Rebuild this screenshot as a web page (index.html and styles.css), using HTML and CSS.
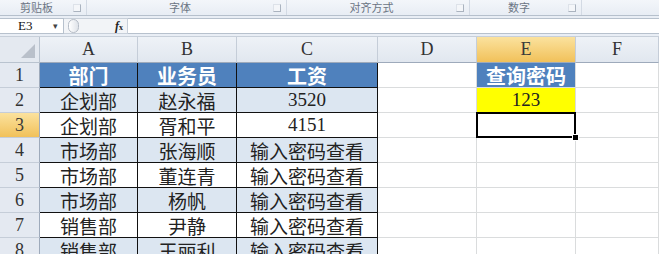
FILE: index.html
```html
<!DOCTYPE html>
<html lang="zh-CN">
<head>
    <meta charset="UTF-8">
    <title>工资查询</title>
    <link rel="stylesheet" href="styles.css">
</head>
<body>

    <div class="ribbon">
        <div class="group g-clip"><span class="glabel">剪贴板</span><span class="launcher"></span></div>
        <div class="group g-font"><span class="glabel">字体</span><span class="launcher"></span></div>
        <div class="group g-align"><span class="glabel">对齐方式</span><span class="launcher"></span></div>
        <div class="group g-num"><span class="glabel">数字</span><span class="launcher"></span></div>
        <div class="group g-rest"></div>
    </div>

    <div class="fbar">
        <div class="namebox"><span class="ref">E3</span><span class="drop">&#9662;</span></div>
        <div class="fbtns">
            <span class="knob"></span>
            <span class="fx"><i>f</i><small>x</small></span>
        </div>
        <div class="finput"></div>
    </div>

    <div class="sheet">
        <!-- column headers -->
        <div class="corner"><span class="tri"></span></div>
        <div class="colhdr">A</div>
        <div class="colhdr">B</div>
        <div class="colhdr">C</div>
        <div class="colhdr">D</div>
        <div class="colhdr active">E</div>
        <div class="colhdr">F</div>

        <!-- row 1 -->
        <div class="rowhdr">1</div>
        <div class="cell tbl head">部门</div>
        <div class="cell tbl head">业务员</div>
        <div class="cell tbl head">工资</div>
        <div class="cell"></div>
        <div class="cell head">查询密码</div>
        <div class="cell"></div>

        <!-- row 2 -->
        <div class="rowhdr">2</div>
        <div class="cell tbl band">企划部</div>
        <div class="cell tbl band">赵永福</div>
        <div class="cell tbl band">3520</div>
        <div class="cell"></div>
        <div class="cell pass">123</div>
        <div class="cell"></div>

        <!-- row 3 -->
        <div class="rowhdr active">3</div>
        <div class="cell tbl">企划部</div>
        <div class="cell tbl">胥和平</div>
        <div class="cell tbl">4151</div>
        <div class="cell"></div>
        <div class="cell sel"></div>
        <div class="cell"></div>

        <!-- row 4 -->
        <div class="rowhdr">4</div>
        <div class="cell tbl band">市场部</div>
        <div class="cell tbl band">张海顺</div>
        <div class="cell tbl band">输入密码查看</div>
        <div class="cell"></div>
        <div class="cell"></div>
        <div class="cell"></div>

        <!-- row 5 -->
        <div class="rowhdr">5</div>
        <div class="cell tbl">市场部</div>
        <div class="cell tbl">董连青</div>
        <div class="cell tbl">输入密码查看</div>
        <div class="cell"></div>
        <div class="cell"></div>
        <div class="cell"></div>

        <!-- row 6 -->
        <div class="rowhdr">6</div>
        <div class="cell tbl band">市场部</div>
        <div class="cell tbl band">杨帆</div>
        <div class="cell tbl band">输入密码查看</div>
        <div class="cell"></div>
        <div class="cell"></div>
        <div class="cell"></div>

        <!-- row 7 -->
        <div class="rowhdr">7</div>
        <div class="cell tbl">销售部</div>
        <div class="cell tbl">尹静</div>
        <div class="cell tbl">输入密码查看</div>
        <div class="cell"></div>
        <div class="cell"></div>
        <div class="cell"></div>

        <!-- row 8 -->
        <div class="rowhdr">8</div>
        <div class="cell tbl band">销售部</div>
        <div class="cell tbl band">王丽利</div>
        <div class="cell tbl band">输入密码查看</div>
        <div class="cell"></div>
        <div class="cell"></div>
        <div class="cell"></div>
    </div>

</body>
</html>
```

FILE: styles.css
```css
body {
    margin: 0;
    padding: 0;
    width: 659px;
    height: 254px;
    overflow: hidden;
    background-color: #fff;
    font-family: "Liberation Serif", "Noto Sans CJK SC", serif;
}

/* ribbon group labels */
.ribbon {
    display: flex;
    height: 15px;
    border-bottom: 1px solid #b6c0cc;
    background: linear-gradient(#f3f6fa, #e8edf4);
}

.group {
    display: flex;
    align-items: center;
    border-right: 1px solid #d3dae4;
    box-sizing: border-box;
}

.g-clip { width: 87px; }
.g-font { width: 200px; }
.g-align { width: 183px; }
.g-num { width: 112px; }
.g-rest { flex: 1; border-right: none; }

.glabel {
    flex: 1;
    text-align: center;
    font-family: "Noto Sans CJK SC", sans-serif;
    font-size: 11px;
    line-height: 15px;
    color: #6b7584;
}

.launcher {
    width: 6px;
    height: 6px;
    margin-right: 5px;
    border: 1px solid #aab3bf;
    border-top-color: #dde2e9;
    border-left-color: #dde2e9;
    background-color: #f4f6f9;
}

/* formula bar */
.fbar {
    display: flex;
    align-items: center;
    height: 21px;
    background-color: #e9eef5;
    border-bottom: 1px solid #c7cfd9;
    box-sizing: border-box;
}

.namebox {
    display: flex;
    align-items: center;
    width: 64px;
    height: 16px;
    background-color: #fff;
    border: 1px solid #b7c1cd;
    border-left: none;
    box-sizing: border-box;
}

.ref {
    flex: 1;
    padding-left: 18px;
    font-size: 13px;
    color: #111;
}

.drop {
    width: 10px;
    font-size: 9px;
    color: #444;
    font-family: "DejaVu Sans", sans-serif;
}

.fbtns {
    display: flex;
    align-items: center;
    width: 64px;
    height: 16px;
    background-color: #f2f4f7;
    border: 1px solid #c7cfd9;
    border-left: none;
    box-sizing: border-box;
}

.knob {
    width: 11px;
    height: 14px;
    margin-left: 4px;
    border-radius: 7px;
    border: 1px solid #b5bcc6;
    background: linear-gradient(90deg, #fff, #dfe3e9);
    box-sizing: border-box;
}

.fx {
    margin-left: auto;
    margin-right: 4px;
    font-size: 12px;
    font-weight: bold;
    color: #222;
}

.fx small {
    font-size: 8px;
}

.finput {
    flex: 1;
    height: 16px;
    background-color: #fff;
    border-top: 1px solid #b7c1cd;
    border-bottom: 1px solid #b7c1cd;
    box-sizing: border-box;
}

/* worksheet grid */
.sheet {
    display: grid;
    grid-template-columns: 40px 98px 99px 141px 99px 99px 1fr;
    grid-template-rows: 26px;
    grid-auto-rows: 25px;
}

.corner,
.colhdr,
.rowhdr,
.cell {
    box-sizing: border-box;
    display: flex;
    align-items: center;
    justify-content: center;
}

.corner {
    background-color: #e4e9f0;
    border-right: 1px solid #b9c3cf;
    border-bottom: 1px solid #b9c3cf;
    align-items: flex-end;
    justify-content: flex-end;
    padding: 0 4px 4px 0;
}

.tri {
    width: 0;
    height: 0;
    border-left: 14px solid transparent;
    border-bottom: 14px solid #b9c0ca;
}

.colhdr {
    background: linear-gradient(#eef2f7, #e1e7ef);
    border-right: 1px solid #c5cdd8;
    border-bottom: 1px solid #9eaabb;
    font-size: 18px;
    color: #333;
}

.rowhdr {
    background-color: #e4e9f1;
    border-right: 1px solid #9eaabb;
    border-bottom: 1px solid #c5cdd8;
    font-size: 18px;
    color: #333;
}

.colhdr.active,
.rowhdr.active {
    background: linear-gradient(#fbe29e, #f1c15a);
    color: #3a3a3a;
}

.cell {
    border-right: 1px solid #dadcdd;
    border-bottom: 1px solid #dadcdd;
    font-size: 19px;
    color: #222;
}

.cell.tbl {
    border-right-color: #111;
    border-bottom-color: #111;
}

.cell.band {
    background-color: #dce6f1;
}

.cell.head {
    background-color: #4f81bd;
    color: #fff;
    font-weight: bold;
    font-size: 20px;
}

.cell.pass {
    background-color: #ffff00;
}

.cell.sel {
    position: relative;
}

.cell.sel::after {
    content: "";
    position: absolute;
    top: -1px;
    left: -1px;
    right: -1px;
    bottom: -1px;
    border: 2px solid #000;
    z-index: 1;
}

.cell.sel::before {
    content: "";
    position: absolute;
    right: -4px;
    bottom: -4px;
    width: 5px;
    height: 5px;
    background-color: #000;
    border: 1px solid #fff;
    z-index: 2;
}
```
